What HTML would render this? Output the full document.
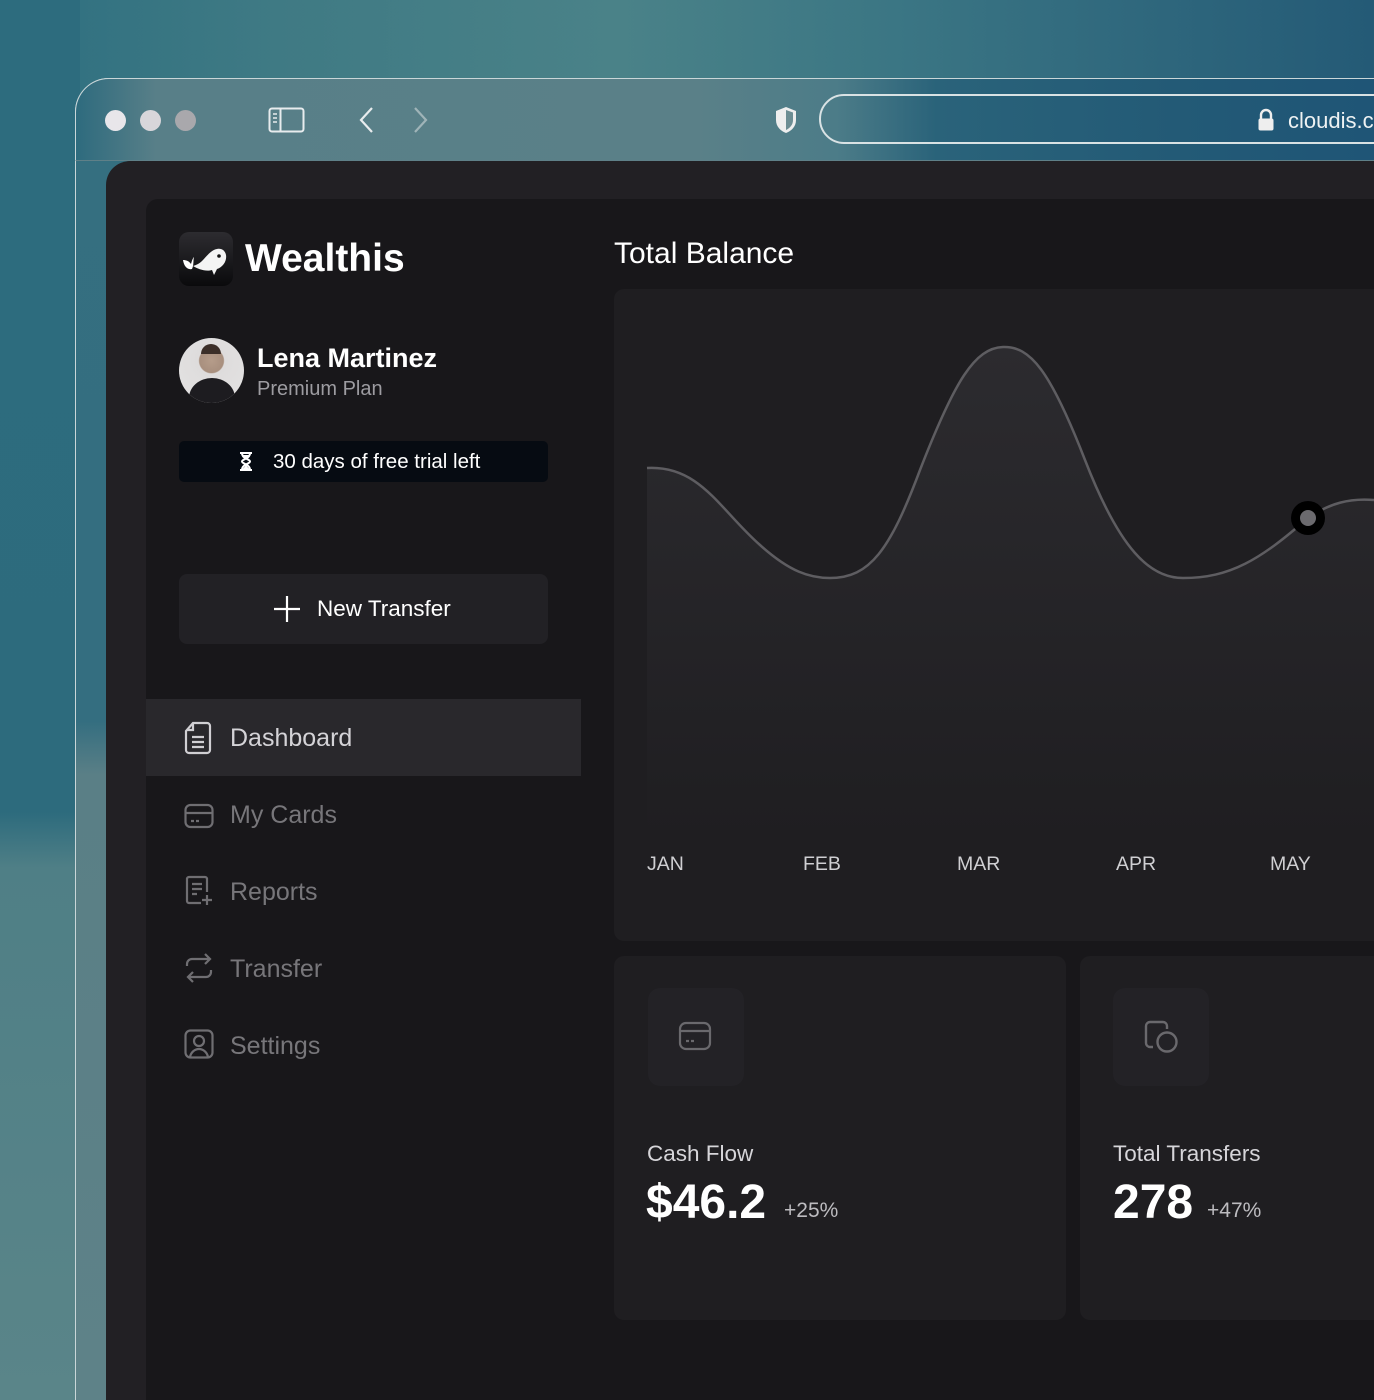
<!DOCTYPE html>
<html><head><meta charset="utf-8"><style>
*{margin:0;padding:0;box-sizing:border-box}
html,body{width:1374px;height:1400px;overflow:hidden}
body{position:relative;font-family:"Liberation Sans",sans-serif;background:linear-gradient(90deg,#2e6f80 0,#3f7a84 20%,#4a8288 45%,#3b7684 65%,#245a76 100%)}
.bgl{position:absolute;left:0;top:0;width:80px;height:1400px;background:linear-gradient(180deg,#2d6c7e 0,#2d6b7d 58%,#4f7f86 62%,#5a8589 100%)}
.frame{position:absolute;left:75px;top:78px;width:1320px;height:1340px;border-radius:34px 0 0 0;border:1.5px solid #c9d6d8;background:linear-gradient(180deg,#356f80 0,#346e80 48%,#5a7f86 52%,#5e8288 100%)}
.toolbar{position:absolute;left:75px;top:78px;width:1299px;height:83px;border-radius:34px 0 0 0;border-top:1.5px solid #c9d6d8;border-left:1.5px solid #c9d6d8;background:linear-gradient(90deg,#2e6b7e 0,#587f88 80px,#5a8088 620px,#4c7c88 760px,#2a637a 860px,#235a76 1100px,#1f5576 1290px);border-bottom:1px solid #5f8088}
.dot{position:absolute;top:110px;width:21px;height:21px;border-radius:50%}
.win{position:absolute;left:106px;top:161px;width:1268px;height:1239px;background:#222024;border-radius:24px 0 0 0}
.panel{position:absolute;left:146px;top:199px;width:1228px;height:1201px;background:#18171a;border-radius:12px 0 0 0}
.t{position:absolute;white-space:nowrap}
.nav{position:absolute;left:146px;width:435px;height:77px}
.nav .lbl{position:absolute;left:84px;top:24px;font-size:25px;color:#77767a}
.nav svg{position:absolute;left:38px;top:22px}
.card{position:absolute;background:#1f1e21;border-radius:10px}
</style></head><body>
<div class="bgl"></div>
<div class="frame"></div>
<div class="toolbar"></div>
<div class="dot" style="left:105px;background:#e8e6ea"></div>
<div class="dot" style="left:140px;background:#d8d6da"></div>
<div class="dot" style="left:175px;background:#a9a8ac"></div>
<svg style="position:absolute;left:268px;top:107px" width="37" height="27" viewBox="0 0 37 27" fill="none" stroke="#e8ecee" stroke-width="2"><rect x="1.5" y="1.5" width="34" height="23" rx="2.5"/><line x1="12.5" y1="1.5" x2="12.5" y2="24.5"/><path d="M5 7h4M5 11h4M5 15h4" stroke-width="1.6"/></svg>
<svg style="position:absolute;left:356px;top:105px" width="20" height="30" fill="none" stroke="#e8ecee" stroke-width="2.2"><path d="M16 3L5 15l11 12"/></svg>
<svg style="position:absolute;left:411px;top:105px" width="20" height="30" fill="none" stroke="#9fb4b8" stroke-width="2.2"><path d="M4 3l11 12L4 27"/></svg>
<svg style="position:absolute;left:772px;top:104px" width="28" height="32"><path d="M14 3L4 7v9c0 7 5 11 10 13 5-2 10-6 10-13V7z" fill="#eeeeee"/><path d="M14 6v20c3-1.5 7-4.5 7-10V8.5z" fill="#6c8d93"/></svg>
<div style="position:absolute;left:819px;top:94px;width:600px;height:50px;border:2px solid #d9e2e4;border-radius:25px"></div>
<svg style="position:absolute;left:1256px;top:108px" width="20" height="24"><path d="M5 11V7a5 5 0 0110 0v4" fill="none" stroke="#eee" stroke-width="2.4"/><rect x="2.5" y="10.5" width="15" height="12" rx="2" fill="#eee"/></svg>
<div class="t" style="left:1288px;top:108px;font-size:22px;color:#eef2f3">cloudis.c</div>

<div class="win"></div>
<div class="panel"></div>

<div style="position:absolute;left:179px;top:232px;width:54px;height:54px;border-radius:10px;background:linear-gradient(180deg,#2d2c30,#0a0a0c)"></div>
<svg style="position:absolute;left:179px;top:232px" width="54" height="54" viewBox="0 0 54 54"><path d="M4 28c3 0 6 1 8 4 1-4 2-6 3-7-1 4 0 8-2 12-4 1-8-2-9-9z" fill="#fff"/><path d="M14 34c5 3 13 6 19 4l2 5 3-6c6-2 10-8 9-14-1-5-5-7-9-6-6 1-10 7-15 12-3 3-6 4-9 5z" fill="#f4f4f4"/><circle cx="40" cy="24" r="1.8" fill="#111"/></svg>
<div class="t" style="left:245px;top:237px;font-size:39px;font-weight:bold;color:#fff">Wealthis</div>

<div style="position:absolute;left:179px;top:338px;width:65px;height:65px;border-radius:50%;background:radial-gradient(circle at 50% 35%,#b59c8a 0,#a88f7e 12px,#dedcdc 13px,#e4e3e3 100%);overflow:hidden"><div style="position:absolute;left:10px;top:40px;width:46px;height:40px;border-radius:50% 50% 0 0;background:#1d1c20"></div><div style="position:absolute;left:22px;top:6px;width:20px;height:10px;border-radius:10px 10px 0 0;background:#3b2e28"></div></div>
<div class="t" style="left:257px;top:343px;font-size:27px;font-weight:bold;color:#fff">Lena Martinez</div>
<div class="t" style="left:257px;top:378px;font-size:20px;color:#9d9ca1">Premium Plan</div>

<div style="position:absolute;left:179px;top:441px;width:369px;height:41px;background:#060b12;border-radius:5px"></div>
<svg style="position:absolute;left:239px;top:452px" width="14" height="19"><path d="M1 1h12M1 18h12M3 1c0 6 8 6 8 8.5S3 12 3 18M11 1c0 6-8 6-8 8.5s8 2.5 8 8.5" stroke="#fff" stroke-width="2" fill="none"/><path d="M3 18l4-5 4 5zM4 3h6l-3 4z" fill="#fff"/></svg>
<div class="t" style="left:273px;top:450px;font-size:20.5px;color:#fff">30 days of free trial left</div>

<div style="position:absolute;left:179px;top:574px;width:369px;height:70px;background:#222125;border-radius:8px"></div>
<svg style="position:absolute;left:274px;top:596px" width="26" height="26" stroke="#fff" stroke-width="2.2"><path d="M13 0v26M0 13h26"/></svg>
<div class="t" style="left:317px;top:596px;font-size:22.5px;color:#fff">New Transfer</div>

<div class="nav" style="top:699px;background:#29282c"><svg width="28" height="34" fill="none" stroke="#d0cfd3" stroke-width="2.2" viewBox="0 0 28 34"><path d="M9 2h14a3 3 0 013 3v24a3 3 0 01-3 3H5a3 3 0 01-3-3V10z"/><path d="M9 3v6H3"/><path d="M8 16h12M8 21h12M8 26h12"/></svg><div class="lbl" style="color:#d4d3d7;top:25px">Dashboard</div></div>
<div class="nav" style="top:776px"><svg width="30" height="26" fill="none" stroke="#6f6e72" stroke-width="2.2" style="top:27px"><rect x="1.5" y="2" width="27" height="22" rx="5"/><path d="M1.5 10h27M7 18h3M12 18h3"/></svg><div class="lbl" style="top:25px">My Cards</div></div>
<div class="nav" style="top:853px"><svg width="30" height="32" fill="none" stroke="#6f6e72" stroke-width="2.2"><path d="M17 28H5a2 2 0 01-2-2V4a2 2 0 012-2h16a2 2 0 012 2v13"/><path d="M8 9h10M8 14h10M8 19h5M23 20v10M18 25h10"/></svg><div class="lbl" style="top:25px">Reports</div></div>
<div class="nav" style="top:930px"><svg width="30" height="32" fill="none" stroke="#6f6e72" stroke-width="2.2"><path d="M3 14v-2a5 5 0 015-5h18M21 2l5 5-5 5M27 18v2a5 5 0 01-5 5H4M9 30l-5-5 5-5"/></svg><div class="lbl" style="top:25px">Transfer</div></div>
<div class="nav" style="top:1007px"><svg width="30" height="30" fill="none" stroke="#6f6e72" stroke-width="2.2"><rect x="1.5" y="1.5" width="27" height="27" rx="5"/><circle cx="15" cy="12" r="5"/><path d="M6 28c1-5 5-8 9-8s8 3 9 8"/></svg><div class="lbl" style="top:25px">Settings</div></div>

<div class="t" style="left:614px;top:237px;font-size:30px;color:#fff">Total Balance</div>
<div class="card" style="left:614px;top:289px;width:780px;height:652px"></div>
<svg style="position:absolute;left:0;top:0" width="1374" height="1000">
<defs><linearGradient id="g" x1="0" y1="0" x2="0" y2="1"><stop offset="0" stop-color="#2c2b2f"/><stop offset="1" stop-color="#1f1e21"/></linearGradient></defs>
<path d="M647 468C700 465 720 510 760 545C790 572 810 578 830 578C870 578 890 550 920 470C955 380 975 348 1003 347C1030 346 1050 370 1085 460C1120 550 1150 578 1183 578C1230 578 1260 560 1308 518C1330 503 1350 498 1374 500V836H647Z" fill="url(#g)"/>
<path d="M647 468C700 465 720 510 760 545C790 572 810 578 830 578C870 578 890 550 920 470C955 380 975 348 1003 347C1030 346 1050 370 1085 460C1120 550 1150 578 1183 578C1230 578 1260 560 1308 518C1330 503 1350 498 1374 500" fill="none" stroke="#5e5d61" stroke-width="2.5"/>
<circle cx="1308" cy="518" r="17" fill="#000"/><circle cx="1308" cy="518" r="8" fill="#6b6a6e"/>
</svg>
<div class="t" style="left:647px;top:853px;font-size:19.5px;color:#cfcfd2">JAN</div>
<div class="t" style="left:803px;top:853px;font-size:19.5px;color:#cfcfd2">FEB</div>
<div class="t" style="left:957px;top:853px;font-size:19.5px;color:#cfcfd2">MAR</div>
<div class="t" style="left:1116px;top:853px;font-size:19.5px;color:#cfcfd2">APR</div>
<div class="t" style="left:1270px;top:853px;font-size:19.5px;color:#cfcfd2">MAY</div>

<div class="card" style="left:614px;top:956px;width:452px;height:364px"></div>
<div class="card" style="left:1080px;top:956px;width:320px;height:364px"></div>
<div style="position:absolute;left:648px;top:988px;width:96px;height:98px;border-radius:12px;background:#232226"></div>
<div style="position:absolute;left:1113px;top:988px;width:96px;height:98px;border-radius:12px;background:#232226"></div>
<svg style="position:absolute;left:678px;top:1021px" width="34" height="30" fill="none" stroke="#6a696d" stroke-width="2.2"><rect x="2" y="2" width="30" height="26" rx="6"/><path d="M2 10h30M8 20h3M13 20h3"/></svg>
<svg style="position:absolute;left:1143px;top:1019px" width="40" height="36" fill="none" stroke="#6a696d" stroke-width="2.4"><path d="M10 28H7a4 4 0 01-4-4V7a4 4 0 014-4h13a4 4 0 014 4v3"/><circle cx="24" cy="23" r="9.5"/></svg>
<div class="t" style="left:647px;top:1141px;font-size:22.5px;color:#d6d5d9">Cash Flow</div>
<div class="t" style="left:646px;top:1175px;font-size:48px;font-weight:bold;color:#fff">$46.2</div>
<div class="t" style="left:784px;top:1199px;font-size:21px;color:#bdbcc0">+25%</div>
<div class="t" style="left:1113px;top:1141px;font-size:22.5px;color:#d6d5d9">Total Transfers</div>
<div class="t" style="left:1113px;top:1175px;font-size:48px;font-weight:bold;color:#fff">278</div>
<div class="t" style="left:1207px;top:1199px;font-size:21px;color:#bdbcc0">+47%</div>
</body></html>
